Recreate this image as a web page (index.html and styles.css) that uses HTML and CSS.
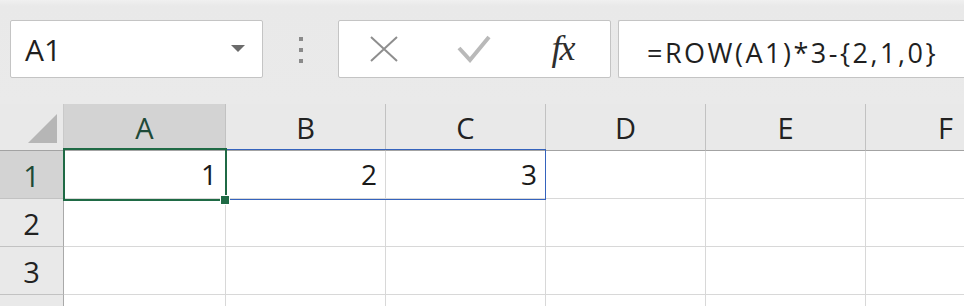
FILE: index.html
```html
<!DOCTYPE html>
<html lang="en">
<head>
<meta charset="utf-8">
<title>Sheet</title>
<link rel="stylesheet" href="styles.css">
</head>
<body>
<div class="app">
  <div class="toolbar">
    <div class="namebox">
      <span class="name">A1</span>
      <svg class="arrow" width="14" height="7" viewBox="0 0 14 7"><polygon points="0,0 14,0 7,7" fill="#6b6b6b"/></svg>
    </div>
    <div class="grip"><i></i><i></i><i></i></div>
    <div class="fbtns">
      <span class="slot"><svg width="28" height="26" viewBox="0 0 28 26"><path d="M1 1 L27 25 M27 1 L1 25" stroke="#8e8e8e" stroke-width="2" fill="none"/></svg></span>
      <span class="slot"><svg width="34" height="28" viewBox="0 0 34 28"><path d="M2 13 L13 25 L32 2" stroke="#b9b9b9" stroke-width="4" fill="none" stroke-linejoin="miter"/></svg></span>
      <span class="slot fx">fx</span>
    </div>
    <div class="fbar">=ROW(A1)*3-{2,1,0}</div>
  </div>
  <div class="sheet">
    <div class="grid">
      <div class="corner"><svg width="64" height="46" viewBox="0 0 64 46"><polygon points="28,39 57,10 57,39" fill="#b6b6b6"/></svg></div>
      <div class="ch sel">A</div>
      <div class="ch">B</div>
      <div class="ch">C</div>
      <div class="ch">D</div>
      <div class="ch">E</div>
      <div class="ch">F</div>

      <div class="rh sel">1</div>
      <div class="cell">1</div>
      <div class="cell">2</div>
      <div class="cell">3</div>
      <div class="cell"></div>
      <div class="cell"></div>
      <div class="cell"></div>

      <div class="rh">2</div>
      <div class="cell"></div>
      <div class="cell"></div>
      <div class="cell"></div>
      <div class="cell"></div>
      <div class="cell"></div>
      <div class="cell"></div>

      <div class="rh">3</div>
      <div class="cell"></div>
      <div class="cell"></div>
      <div class="cell"></div>
      <div class="cell"></div>
      <div class="cell"></div>
      <div class="cell"></div>

      <div class="rh"></div>
      <div class="cell"></div>
      <div class="cell"></div>
      <div class="cell"></div>
      <div class="cell"></div>
      <div class="cell"></div>
      <div class="cell"></div>
    </div>
    <div class="spill"></div>
    <div class="active"></div>
    <div class="handle"></div>
  </div>
</div>
</body>
</html>
```
FILE: styles.css
```css
* { box-sizing: border-box; }
html, body { margin: 0; padding: 0; }
body {
  width: 964px;
  height: 306px;
  overflow: hidden;
  background: #ffffff;
  font-family: "Open Sans", "Noto Sans", sans-serif;
  color: #222222;
}
.app { width: 964px; height: 306px; overflow: hidden; }

.toolbar {
  height: 104px;
  background: linear-gradient(#f0f0f0 0px, #e9e9e9 6px, #eaeaea 100%);
  display: flex;
  align-items: flex-start;
  padding: 20px 0 0 10px;
  white-space: nowrap;
}
.namebox {
  width: 253px;
  height: 58px;
  background: #fff;
  border: 1px solid #c4c4c4;
  border-radius: 2px;
  display: flex;
  align-items: center;
  padding: 1px 0 0 14px;
  flex: none;
}
.name {
  font-size: 30px;
  line-height: 56px;
  color: #1f1f1f;
  flex: 1;
}
.arrow { margin: 0 17px 0 0; position: relative; top: -1px; }

.grip {
  width: 75px;
  height: 58px;
  flex: none;
  display: flex;
  flex-direction: column;
  align-items: center;
  padding-top: 17px;
  gap: 7px;
}
.grip i {
  display: block;
  width: 4px;
  height: 4px;
  background: #8a8a8a;
  margin-left: 1px;
}

.fbtns {
  width: 273px;
  height: 58px;
  flex: none;
  background: #fff;
  border: 1px solid #c4c4c4;
  border-radius: 2px;
  display: flex;
  align-items: center;
}
.slot {
  width: 90px;
  height: 56px;
  display: flex;
  align-items: center;
  justify-content: center;
}
.fx {
  font-family: "Liberation Serif", "DejaVu Serif", serif;
  font-style: italic;
  font-size: 36px;
  color: #2e2e2e;
  width: 91px;
  padding: 0 4px 2px 0;
  letter-spacing: -2px;
}

.fbar {
  margin-left: 7px;
  width: 400px;
  height: 58px;
  flex: none;
  background: #fff;
  border: 1px solid #c4c4c4;
  border-right: none;
  border-radius: 2px 0 0 2px;
  padding: 8px 0 0 28px;
  font-size: 27px;
  line-height: 48px;
  letter-spacing: 2.5px;
  color: #1f1f1f;
}

.sheet {
  position: relative;
  height: 202px;
  overflow: hidden;
}
.grid {
  display: grid;
  grid-template-columns: 64px 162px 160px 160px 160px 160px 160px;
  grid-template-rows: 47px 48px 48px 48px 48px;
  width: 1026px;
}
.corner {
  background: #e9e9e9;
  border-right: 1px solid #c9c9c9;
  border-bottom: 1px solid #a3a3a3;
}
.corner svg { display: block; }
.ch {
  background: #e9e9e9;
  border-right: 1px solid #c2c2c2;
  border-bottom: 1px solid #a3a3a3;
  text-align: center;
  font-size: 29px;
  line-height: 46px;
  padding-top: 1px;
  color: #222;
}
.ch.sel { background: #d3d3d3; color: #1e4a37; }
.rh {
  background: #e9e9e9;
  border-right: 1px solid #a9a9a9;
  border-bottom: 1px solid #c2c2c2;
  text-align: center;
  font-size: 29px;
  line-height: 47px;
  padding-top: 1px;
  color: #222;
}
.rh.sel { background: #d3d3d3; color: #1e4a37; }
.cell {
  background: #fff;
  border-right: 1px solid #d8d8d8;
  border-bottom: 1px solid #d8d8d8;
  text-align: right;
  padding-right: 8px;
  font-size: 28px;
  line-height: 47px;
  color: #1a1a1a;
}

.spill {
  position: absolute;
  left: 63px;
  top: 45px;
  width: 483px;
  height: 51px;
  border: 1px solid #3563bd;
}
.active {
  position: absolute;
  left: 63px;
  top: 44px;
  width: 164px;
  height: 53px;
  border: 2px solid #1f6a45;
}
.handle {
  position: absolute;
  left: 220px;
  top: 91px;
  width: 10px;
  height: 10px;
  background: #1f6a45;
  border: 1px solid #ffffff;
}
```
